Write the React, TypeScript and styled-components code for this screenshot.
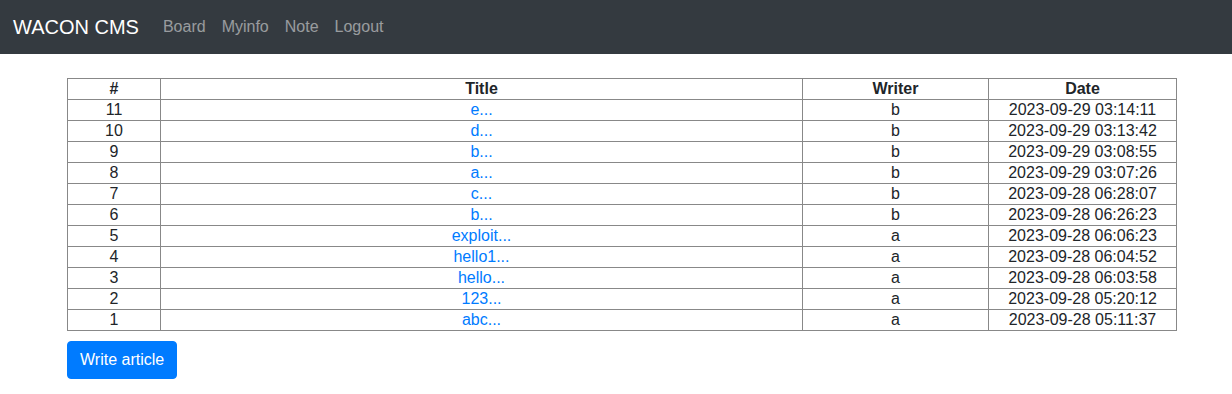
import React from "react";
import styled, { createGlobalStyle } from "styled-components";

const Global = createGlobalStyle`
  html, body { margin: 0; padding: 0; background: #fff; }
  body { font-family: "Liberation Sans", Arial, sans-serif; font-size: 16px; color: #212529; }
`;

const Navbar = styled.nav`
  height: 54px;
  background: #343a40;
  display: flex;
  align-items: center;
  padding: 0 0 0 13px;
  box-sizing: border-box;
`;

const Brand = styled.a`
  color: #fff;
  font-size: 20px;
  line-height: 30px;
  margin-right: 24px;
  text-decoration: none;
`;

const NavList = styled.div`
  display: flex;
  gap: 16px;
`;

const NavLink = styled.a`
  color: rgba(255, 255, 255, 0.5);
  font-size: 16px;
  line-height: 24px;
  text-decoration: none;
`;

const Main = styled.main`
  padding: 24px 0 0 67px;
`;

const Table = styled.table`
  width: 1110px;
  border-collapse: collapse;
  table-layout: fixed;
`;

const Th = styled.th<{ $w?: number }>`
  border: 1px solid #888;
  font-weight: bold;
  text-align: center;
  padding: 0;
  height: 20px;
  line-height: 20px;
  ${(p) => (p.$w ? `width: ${p.$w}px;` : "")}
`;

const Td = styled.td`
  border: 1px solid #888;
  text-align: center;
  padding: 0;
  height: 20px;
  line-height: 20px;
`;

const TitleLink = styled.a`
  color: #007bff;
  text-decoration: none;
`;

const Button = styled.button`
  display: block;
  margin-top: 10px;
  background: #007bff;
  color: #fff;
  border: 1px solid #007bff;
  border-radius: 4px;
  font-family: inherit;
  font-size: 16px;
  line-height: 24px;
  padding: 6px 12px;
  height: 38px;
  box-sizing: border-box;
  white-space: nowrap;
  cursor: pointer;
`;

const rows = [
  [11, "e...", "b", "2023-09-29 03:14:11"],
  [10, "d...", "b", "2023-09-29 03:13:42"],
  [9, "b...", "b", "2023-09-29 03:08:55"],
  [8, "a...", "b", "2023-09-29 03:07:26"],
  [7, "c...", "b", "2023-09-28 06:28:07"],
  [6, "b...", "b", "2023-09-28 06:26:23"],
  [5, "exploit...", "a", "2023-09-28 06:06:23"],
  [4, "hello1...", "a", "2023-09-28 06:04:52"],
  [3, "hello...", "a", "2023-09-28 06:03:58"],
  [2, "123...", "a", "2023-09-28 05:20:12"],
  [1, "abc...", "a", "2023-09-28 05:11:37"],
] as const;

export default function App() {
  return (
    <>
      <Global />
      <Navbar>
        <Brand href="#">WACON CMS</Brand>
        <NavList>
          <NavLink href="#">Board</NavLink>
          <NavLink href="#">Myinfo</NavLink>
          <NavLink href="#">Note</NavLink>
          <NavLink href="#">Logout</NavLink>
        </NavList>
      </Navbar>
      <Main>
        <Table>
          <thead>
            <tr>
              <Th $w={92}>#</Th>
              <Th $w={641}>Title</Th>
              <Th $w={185}>Writer</Th>
              <Th>Date</Th>
            </tr>
          </thead>
          <tbody>
            {rows.map((r) => (
              <tr key={r[0]}>
                <Td>{r[0]}</Td>
                <Td>
                  <TitleLink href="#">{r[1]}</TitleLink>
                </Td>
                <Td>{r[2]}</Td>
                <Td>{r[3]}</Td>
              </tr>
            ))}
          </tbody>
        </Table>
        <Button>Write article</Button>
      </Main>
    </>
  );
}
